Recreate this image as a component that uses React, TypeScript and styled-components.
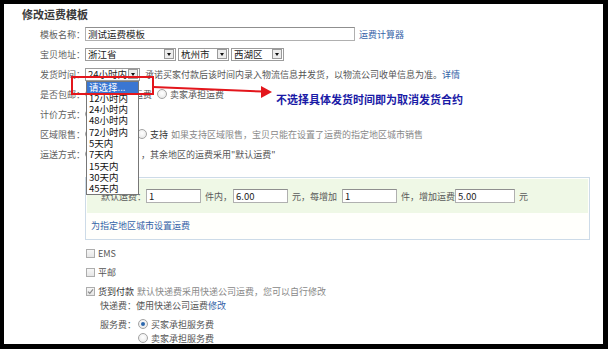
import React from "react";
import styled, { createGlobalStyle } from "styled-components";

const GlobalStyle = createGlobalStyle`
  html, body { margin: 0; padding: 0; background: #000; }
  body { font-family: "Noto Sans CJK SC", "Noto Sans", sans-serif; }
  * { box-sizing: border-box; }
`;

const Frame = styled.div`
  position: relative;
  margin: 4px 5px 0 4px;
  width: 599px;
  height: 340px;
  background: #fff;
  overflow: hidden;
  font-size: 9px;
  color: #555;
`;

const Title = styled.h1`
  margin: 0;
  height: 20px;
  line-height: 20px;
  padding-left: 18px;
  font-size: 11px;
  font-weight: bold;
  color: #3a3a3a;
`;

const Form = styled.div`
  padding-left: 21px;
`;

const Row = styled.div`
  display: flex;
  align-items: center;
  height: 20px;
`;

const Label = styled.span`
  flex: none;
  width: 60px;
  text-align: right;
  color: #5e5e5e;
  white-space: nowrap;
`;

const Field = styled.div<{ $gap?: number }>`
  display: flex;
  align-items: center;
  gap: ${(p) => p.$gap ?? 4}px;
  white-space: nowrap;
`;

const TextInput = styled.input<{ $w: number }>`
  width: ${(p) => p.$w}px;
  height: 14px;
  margin: 0;
  padding: 0 2px;
  border: 1px solid #b0b0b0;
  border-top-color: #8f8f8f;
  font-family: inherit;
  font-size: 9.5px;
  line-height: 12px;
  color: #222;
  background: #fff;
  outline: none;
`;

const Link = styled.a`
  color: #3563a8;
  text-decoration: none;
  cursor: pointer;
`;

const Select = styled.div<{ $w: number }>`
  position: relative;
  display: flex;
  align-items: center;
  width: ${(p) => p.$w}px;
  height: 13px;
  border: 1px solid #9c9c9c;
  background: #fff;
`;

const SelectText = styled.span`
  flex: 1;
  padding-left: 2px;
  font-size: 9.5px;
  line-height: 11px;
  color: #222;
`;

const ArrowBtn = styled.span`
  flex: none;
  display: flex;
  align-items: center;
  justify-content: center;
  width: 10px;
  height: 10px;
  margin-right: 1px;
  border: 1px solid #9a9a9a;
  background: #ececec;
  &::after {
    content: "";
    border-left: 2.5px solid transparent;
    border-right: 2.5px solid transparent;
    border-top: 3px solid #111;
  }
`;

const DropList = styled.ul`
  position: absolute;
  top: calc(100% + 1px);
  left: 0;
  width: 100%;
  margin: 0;
  padding: 0;
  list-style: none;
  border: 1px solid #777;
  background: #fff;
  z-index: 5;
`;

const DropItem = styled.li<{ $active?: boolean }>`
  height: 11.3px;
  line-height: 11.3px;
  padding-left: 2px;
  font-size: 9.5px;
  color: ${(p) => (p.$active ? "#fff" : "#111")};
  background: ${(p) => (p.$active ? "#3a76d2" : "transparent")};
`;

const Radio = styled.span<{ $checked?: boolean }>`
  flex: none;
  display: inline-flex;
  align-items: center;
  justify-content: center;
  width: 10px;
  height: 10px;
  border: 1px solid #a3a3a3;
  border-radius: 50%;
  background: radial-gradient(circle at 50% 40%, #fff, #e4e4e4);
  &::after {
    content: "";
    width: 4px;
    height: 4px;
    border-radius: 50%;
    background: ${(p) => (p.$checked ? "#2c67ad" : "transparent")};
  }
`;

const Option = styled.span`
  display: inline-flex;
  align-items: center;
  gap: 3px;
`;

const Strong = styled.span`
  color: #333;
`;

const Hint = styled.span`
  color: #888;
`;

const Trailing = styled.span<{ $ml: number }>`
  margin-left: ${(p) => p.$ml}px;
`;

const Box = styled.div`
  margin: 13px 0 0 60px;
  width: 505px;
  border: 1px solid #cddbe8;
  padding: 1px;
  background: #fffffc;
`;

const GreenRow = styled.div`
  display: flex;
  align-items: center;
  height: 34px;
  padding-left: 14px;
  background: #eff8e6;
  white-space: nowrap;
`;

const Unit = styled.span<{ $ml?: number; $mr?: number }>`
  margin-left: ${(p) => p.$ml ?? 4}px;
  margin-right: ${(p) => p.$mr ?? 1}px;
  color: #5a5a5a;
`;

const LinkRow = styled.div`
  display: flex;
  align-items: center;
  height: 25px;
  padding-left: 4px;
`;

const ShipList = styled.div`
  margin: 4px 0 0 61px;
`;

const CheckRow = styled.div<{ $h?: number; $mt?: number }>`
  display: flex;
  align-items: center;
  gap: 3px;
  height: ${(p) => p.$h ?? 19}px;
  margin-top: ${(p) => p.$mt ?? 0}px;
  white-space: nowrap;
`;

const CheckBox = styled.span<{ $checked?: boolean }>`
  flex: none;
  display: inline-flex;
  align-items: center;
  justify-content: center;
  width: 9px;
  height: 9px;
  border: 1px solid #adadad;
  background: linear-gradient(#f7f7f7, #e6e6e6);
  svg {
    display: ${(p) => (p.$checked ? "block" : "none")};
  }
`;

const SubBlock = styled.div`
  padding-left: 14px;
`;

const SubRow = styled.div`
  display: flex;
  align-items: center;
  height: 14px;
  white-space: nowrap;
`;

const ServiceGrid = styled.div`
  display: grid;
  grid-template-columns: 38px auto;
  grid-auto-rows: 14px;
  align-items: center;
  margin-top: 5px;
`;

const Overlay = styled.svg`
  position: absolute;
  left: 0;
  top: 0;
  width: 599px;
  height: 340px;
  pointer-events: none;
  z-index: 10;
`;

const Note = styled.div`
  position: absolute;
  left: 272px;
  top: 87px;
  line-height: 16px;
  font-size: 11px;
  font-weight: bold;
  color: #1a1aa6;
  white-space: nowrap;
  z-index: 10;
`;

const times = [
  "请选择...",
  "12小时内",
  "24小时内",
  "48小时内",
  "72小时内",
  "5天内",
  "7天内",
  "15天内",
  "30天内",
  "45天内",
];

function Dropdown({ w, value, options }: { w: number; value: string; options?: string[] }) {
  return (
    <Select $w={w}>
      <SelectText>{value}</SelectText>
      <ArrowBtn />
      {options && (
        <DropList>
          {options.map((o, i) => (
            <DropItem key={o} $active={i === 0}>
              {o}
            </DropItem>
          ))}
        </DropList>
      )}
    </Select>
  );
}

function Check({ checked }: { checked?: boolean }) {
  return (
    <CheckBox $checked={checked}>
      <svg width="7" height="7" viewBox="0 0 7 7">
        <path d="M1 3.6 L2.8 5.4 L6 1.4" fill="none" stroke="#8a8a8a" strokeWidth="1.2" />
      </svg>
    </CheckBox>
  );
}

export default function App() {
  return (
    <>
      <GlobalStyle />
      <Frame>
        <Title>修改运费模板</Title>
        <Form>
          <Row>
            <Label>模板名称：</Label>
            <Field>
              <TextInput $w={270} readOnly value="测试运费模板" />
              <Link>运费计算器</Link>
            </Field>
          </Row>
          <Row>
            <Label>宝贝地址：</Label>
            <Field $gap={2}>
              <Dropdown w={91} value="浙江省" />
              <Dropdown w={51} value="杭州市" />
              <Dropdown w={53} value="西湖区" />
            </Field>
          </Row>
          <Row>
            <Label>发货时间：</Label>
            <Field $gap={5}>
              <Dropdown w={55} value="24小时内" options={times} />
              <span>
                承诺买家付款后该时间内录入物流信息并发货，以物流公司收单信息为准。<Link>详情</Link>
              </span>
            </Field>
          </Row>
          <Row>
            <Label>是否包邮：</Label>
            <Field $gap={5}>
              <Option>
                <Radio $checked />
                买家承担运费
              </Option>
              <Option>
                <Radio />
                卖家承担运费
              </Option>
            </Field>
          </Row>
          <Row>
            <Label>计价方式：</Label>
            <Field>
              <Radio $checked />
            </Field>
          </Row>
          <Row>
            <Label>区域限售：</Label>
            <Field $gap={42}>
              <Radio $checked />
              <Option>
                <Radio />
                <Strong>支持</Strong>
                <Hint>如果支持区域限售，宝贝只能在设置了运费的指定地区城市销售</Hint>
              </Option>
            </Field>
          </Row>
          <Row>
            <Label>运送方式：</Label>
            <Field $gap={0}>
              <Radio />
              <Trailing $ml={46}>，其余地区的运费采用"默认运费"</Trailing>
            </Field>
          </Row>
          <Box>
            <GreenRow>
              <Unit $ml={0} $mr={0}>默认运费：</Unit>
              <TextInput $w={55} readOnly value="1" />
              <Unit>件内，</Unit>
              <TextInput $w={55} readOnly value="6.00" />
              <Unit $mr={5}>元，每增加</Unit>
              <TextInput $w={55} readOnly value="1" />
              <Unit $mr={0}>件，增加运费</Unit>
              <TextInput $w={60} readOnly value="5.00" />
              <Unit>元</Unit>
            </GreenRow>
            <LinkRow>
              <Link>为指定地区城市设置运费</Link>
            </LinkRow>
          </Box>
          <ShipList>
            <CheckRow>
              <Check />
              <span>EMS</span>
            </CheckRow>
            <CheckRow>
              <Check />
              <span>平邮</span>
            </CheckRow>
            <CheckRow $h={14} $mt={2}>
              <Check checked />
              <Strong>货到付款</Strong>
              <Hint>默认快递费采用快递公司运费，您可以自行修改</Hint>
            </CheckRow>
            <SubBlock>
              <SubRow>
                快递费：使用快递公司运费<Link>修改</Link>
              </SubRow>
              <ServiceGrid>
                <span>服务费：</span>
                <Option>
                  <Radio $checked />
                  买家承担服务费
                </Option>
                <span />
                <Option>
                  <Radio />
                  卖家承担服务费
                </Option>
              </ServiceGrid>
            </SubBlock>
          </ShipList>
        </Form>
        <Overlay viewBox="0 0 599 340">
          <rect x="68" y="73" width="81" height="17" fill="none" stroke="#e3161c" strokeWidth="2" />
          <line x1="149" y1="83" x2="259" y2="87.5" stroke="#e3161c" strokeWidth="2" />
          <polygon points="268,88 257,82 257,94" fill="#e3161c" />
        </Overlay>
        <Note>不选择具体发货时间即为取消发货合约</Note>
      </Frame>
    </>
  );
}
